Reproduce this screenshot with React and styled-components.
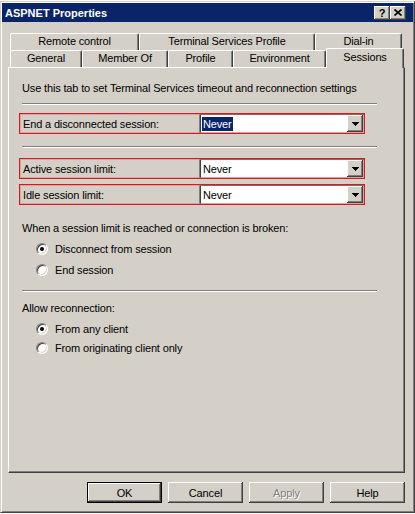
import React from "react";
import styled, { createGlobalStyle, css } from "styled-components";

const GlobalStyle = createGlobalStyle`
  html, body {
    margin: 0;
    padding: 0;
    background: #ffffff;
  }
`;

const raised = css`
  box-shadow: inset -1px -1px #404040, inset 1px 1px #ffffff,
    inset -2px -2px #808080, inset 2px 2px #d4d0c8;
`;

const Window = styled.div`
  width: 415px;
  box-sizing: border-box;
  margin-top: 1px;
  padding: 1px;
  background: #d4d0c8;
  border: 1px solid;
  border-color: #d4d0c8 #404040 #404040 #d4d0c8;
  box-shadow: inset 1px 1px #ffffff, inset -1px -1px #808080;
  font-family: "Liberation Sans", Arial, sans-serif;
  font-size: 11px;
  color: #000;
`;

const TitleBar = styled.div`
  height: 19px;
  display: flex;
  align-items: center;
  padding: 0 7px 0 3px;
  background: #0a246a;
  color: #fff;
  font-weight: bold;
`;

const TitleText = styled.span`
  flex: 1;
`;

const TitleButton = styled.div`
  width: 16px;
  height: 14px;
  box-sizing: border-box;
  display: flex;
  align-items: center;
  justify-content: center;
  background: #d4d0c8;
  color: #000;
  font-size: 11px;
  font-weight: bold;
  ${raised}
`;

const Body = styled.div`
  padding: 11px 8px 8px 6px;
`;

const TabStrip = styled.div`
  margin-left: 2px;
  width: 392px;
`;

const TabRow = styled.div`
  display: flex;
  height: 17px;
`;

const Tab = styled.div`
  position: relative;
  box-sizing: border-box;
  width: ${(p) => p.w}px;
  height: 17px;
  line-height: 15px;
  text-align: center;
  letter-spacing: -0.15px;
  background: #d4d0c8;
  border-top: 1px solid #ffffff;
  border-left: 1px solid #ffffff;
  border-right: 1px solid #404040;
  border-radius: 2px 2px 0 0;
  box-shadow: inset -1px 0 #808080;
  ${(p) =>
    p.active &&
    css`
      z-index: 2;
      width: ${p.w + 2}px;
      height: 20px;
      margin: -2px -2px 0 0;
      line-height: 16px;
    `}
`;

const Panel = styled.div`
  box-sizing: border-box;
  height: 406px;
  padding: 14px 0 0 13px;
  border-top: 1px solid #ffffff;
  border-left: 1px solid #ffffff;
  border-right: 1px solid #404040;
  border-bottom: 1px solid #404040;
  box-shadow: inset -1px -1px #808080;
  letter-spacing: -0.15px;
`;

const Text = styled.div`
  line-height: 13px;
  margin-top: ${(p) => p.mt || 0}px;
`;

const Separator = styled.div`
  width: 355px;
  border-top: 1px solid #808080;
  border-bottom: 1px solid #ffffff;
  margin-top: ${(p) => p.mt}px;
`;

const FieldRow = styled.div`
  position: relative;
  box-sizing: border-box;
  width: 346px;
  height: 21px;
  margin: ${(p) => p.mt}px 0 0 -3px;
  padding-left: 4px;
  display: flex;
  align-items: center;
  &::after {
    content: "";
    position: absolute;
    inset: 0;
    border: 1px solid #cc1f24;
    box-shadow: inset 0 0 0 1px rgba(236, 120, 120, 0.55);
    pointer-events: none;
  }
`;

const FieldLabel = styled.span`
  flex: 1;
`;

const Combo = styled.div`
  box-sizing: border-box;
  width: 166px;
  height: 21px;
  padding: 1px;
  display: flex;
  align-items: center;
  background: #ffffff;
  border: 1px solid;
  border-color: #808080 #ffffff #ffffff #808080;
  box-shadow: inset 1px 1px #404040, inset -1px -1px #d4d0c8;
`;

const ComboValue = styled.span`
  margin-left: 1px;
  padding: 0 1px;
  line-height: 14px;
  ${(p) =>
    p.selected &&
    css`
      background: #0a246a;
      color: #ffffff;
    `}
`;

const DropButton = styled.div`
  margin-left: auto;
  width: 16px;
  height: 17px;
  box-sizing: border-box;
  display: flex;
  align-items: center;
  justify-content: center;
  background: #d4d0c8;
  ${raised}
`;

const RadioRow = styled.div`
  height: ${(p) => p.h}px;
  margin-top: ${(p) => p.mt || 0}px;
  padding-left: 14px;
  display: flex;
  align-items: center;
`;

const RadioCircle = styled.span`
  position: relative;
  width: 12px;
  height: 12px;
  box-sizing: border-box;
  margin-right: 7px;
  border-radius: 50%;
  background: #ffffff;
  border: 1px solid;
  border-color: #808080 #ffffff #ffffff #808080;
  box-shadow: inset 1px 1px #404040, inset -1px -1px #d4d0c8;
  ${(p) =>
    p.checked &&
    css`
      &::after {
        content: "";
        position: absolute;
        left: 3px;
        top: 3px;
        width: 4px;
        height: 4px;
        border-radius: 50%;
        background: #000;
      }
    `}
`;

const ButtonBar = styled.div`
  display: flex;
  justify-content: flex-end;
  gap: 6px;
  margin-top: 9px;
`;

const Button = styled.div`
  box-sizing: border-box;
  width: 75px;
  height: 21px;
  display: flex;
  align-items: center;
  justify-content: center;
  background: #d4d0c8;
  letter-spacing: -0.15px;
  ${raised}
  ${(p) =>
    p.primary &&
    css`
      border: 1px solid #000;
    `}
  ${(p) =>
    p.disabled &&
    css`
      color: #808080;
      text-shadow: 1px 1px #ffffff;
    `}
`;

const Arrow = () => (
  <svg width="7" height="4" viewBox="0 0 7 4">
    <path d="M0 0h7v1H0zM1 1h5v1H1zM2 2h3v1H2zM3 3h1v1H3z" fill="#000" />
  </svg>
);

const CloseGlyph = () => (
  <svg width="8" height="7" viewBox="0 0 8 7">
    <path d="M0.5 0.5 L7.5 6.5 M7.5 0.5 L0.5 6.5" stroke="#000" strokeWidth="1.6" />
  </svg>
);

const backTabs = [
  ["Remote control", 129],
  ["Terminal Services Profile", 176],
  ["Dial-in", 87],
];

const frontTabs = [
  ["General", 72],
  ["Member Of", 86],
  ["Profile", 65],
  ["Environment", 93],
  ["Sessions", 76, true],
];

function Field({ label, selected, mt }) {
  return (
    <FieldRow mt={mt}>
      <FieldLabel>{label}</FieldLabel>
      <Combo>
        <ComboValue selected={selected}>Never</ComboValue>
        <DropButton>
          <Arrow />
        </DropButton>
      </Combo>
    </FieldRow>
  );
}

function Radio({ label, checked, h, mt }) {
  return (
    <RadioRow h={h} mt={mt}>
      <RadioCircle checked={checked} />
      {label}
    </RadioRow>
  );
}

export default function App() {
  return (
    <>
      <GlobalStyle />
      <Window>
        <TitleBar>
          <TitleText>ASPNET Properties</TitleText>
          <TitleButton>?</TitleButton>
          <TitleButton>
            <CloseGlyph />
          </TitleButton>
        </TitleBar>
        <Body>
          <TabStrip>
            <TabRow>
              {backTabs.map(([name, w]) => (
                <Tab key={name} w={w}>
                  {name}
                </Tab>
              ))}
            </TabRow>
            <TabRow>
              {frontTabs.map(([name, w, active]) => (
                <Tab key={name} w={w} active={active}>
                  {name}
                </Tab>
              ))}
            </TabRow>
          </TabStrip>
          <Panel>
            <Text>Use this tab to set Terminal Services timeout and reconnection settings</Text>
            <Separator mt={8} />
            <Field label="End a disconnected session:" selected mt={8} />
            <Separator mt={12} />
            <Field label="Active session limit:" mt={10} />
            <Field label="Idle session limit:" mt={5} />
            <Text mt={17}>When a session limit is reached or connection is broken:</Text>
            <Radio label="Disconnect from session" checked h={21} mt={3} />
            <Radio label="End session" h={21} />
            <Separator mt={10} />
            <Text mt={10}>Allow reconnection:</Text>
            <Radio label="From any client" checked h={19} mt={4} />
            <Radio label="From originating client only" h={19} />
          </Panel>
          <ButtonBar>
            <Button primary>OK</Button>
            <Button>Cancel</Button>
            <Button disabled>Apply</Button>
            <Button>Help</Button>
          </ButtonBar>
        </Body>
      </Window>
    </>
  );
}
